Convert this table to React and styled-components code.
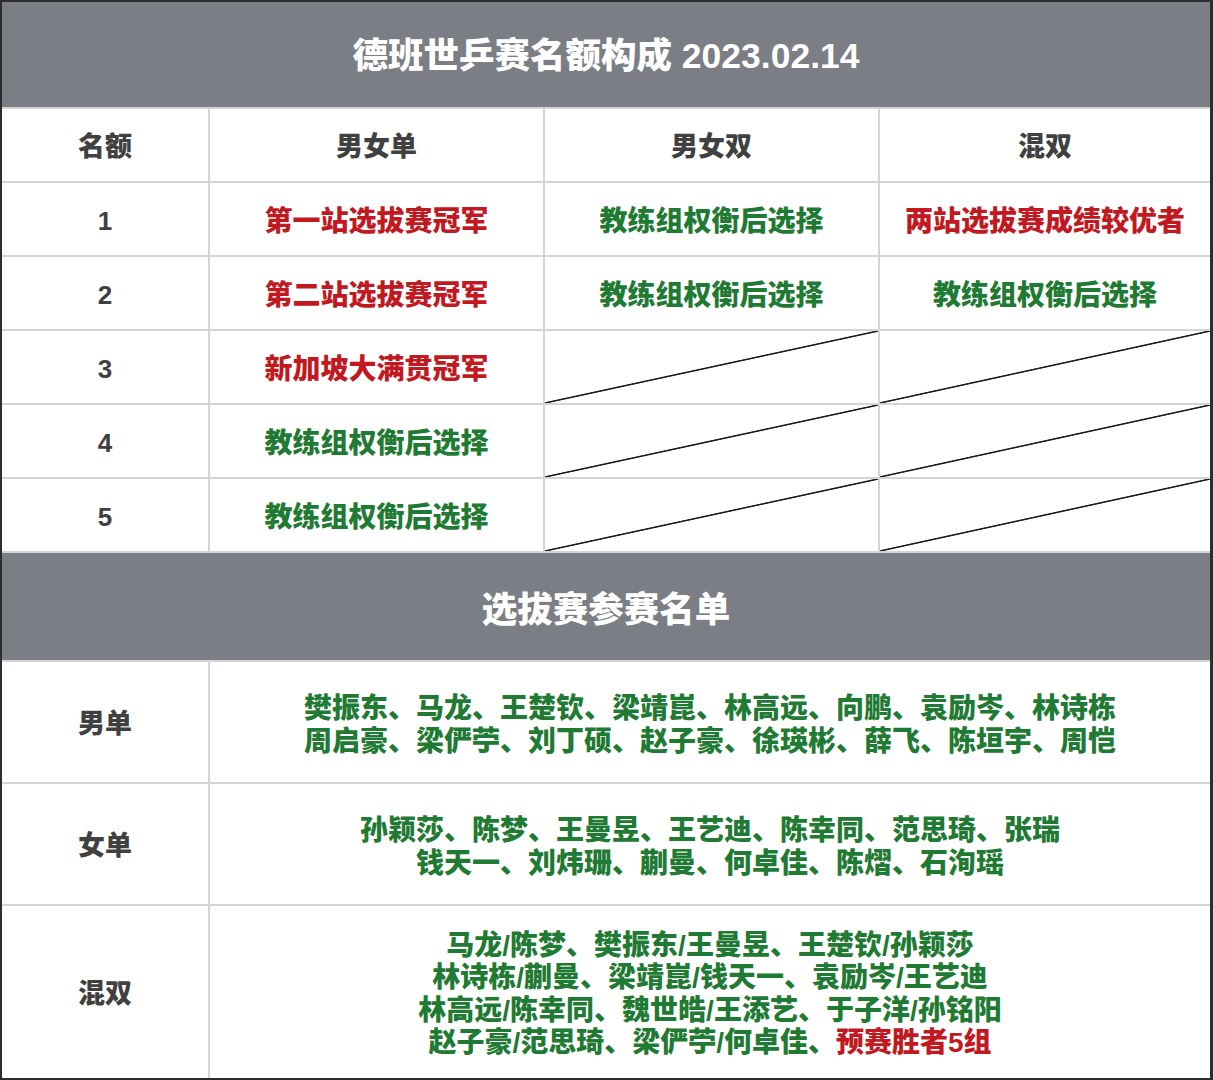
import React from 'react';
import styled, { createGlobalStyle } from 'styled-components';

const GlobalStyle = createGlobalStyle`
  html, body {
    margin: 0;
    padding: 0;
    background: #ffffff;
  }
  body {
    font-family: "Liberation Sans", "Noto Sans CJK SC", sans-serif;
  }
`;

const RED = '#c1191f';
const GREEN = '#1f7a33';
const INK = '#404040';

const Frame = styled.div`
  box-sizing: border-box;
  width: 1213px;
  height: 1080px;
  border-style: solid;
  border-color: #2d2d2d;
  border-width: 2px 3px 2px 2px;
  background: #d4d4d4;
  display: grid;
  grid-template-columns: 206px 333px 333px 330px;
  grid-template-rows: 105px repeat(6, 72px) 107px 120px 120px 172px;
  gap: 2px;
`;

const Band = styled.div`
  box-sizing: border-box;
  grid-column: 1 / -1;
  background: #7b7e84;
  color: #ffffff;
  font-weight: 900;
  font-size: ${p => p.$size || 35.5}px;
  padding-bottom: ${p => p.$lift || 0}px;
  display: flex;
  align-items: center;
  justify-content: center;
`;

const Cell = styled.div`
  box-sizing: border-box;
  background: #ffffff;
  display: flex;
  align-items: center;
  justify-content: center;
  text-align: center;
  padding-top: 5px;
  font-weight: 900;
  font-size: ${p => p.$size || 28}px;
  color: ${p => p.$color || INK};
  line-height: ${p => p.$lh || 1.2};
  grid-column: ${p => p.$span || 'auto'};
`;

const Slash = styled.div`
  background: linear-gradient(
    to bottom right,
    #ffffff calc(50% - 1.2px),
    #1e1e1e calc(50% - 0.4px),
    #1e1e1e calc(50% + 0.4px),
    #ffffff calc(50% + 1.2px)
  );
`;

const Lines = styled.div`
  display: flex;
  flex-direction: column;
  align-items: center;
`;

const Red = styled.span`
  color: ${RED};
`;

const quota = [
  ['1', ['第一站选拔赛冠军', RED], ['教练组权衡后选择', GREEN], ['两站选拔赛成绩较优者', RED]],
  ['2', ['第二站选拔赛冠军', RED], ['教练组权衡后选择', GREEN], ['教练组权衡后选择', GREEN]],
  ['3', ['新加坡大满贯冠军', RED], null, null],
  ['4', ['教练组权衡后选择', GREEN], null, null],
  ['5', ['教练组权衡后选择', GREEN], null, null],
];

export default function App() {
  return (
    <>
      <GlobalStyle />
      <Frame>
        <Band $lift={4}>德班世乒赛名额构成 2023.02.14</Band>

        <Cell $size={27}>名额</Cell>
        <Cell $size={27}>男女单</Cell>
        <Cell $size={27}>男女双</Cell>
        <Cell $size={27}>混双</Cell>

        {quota.map(([num, ...cols]) => (
          <React.Fragment key={num}>
            <Cell $size={26}>{num}</Cell>
            {cols.map((c, i) =>
              c ? (
                <Cell key={i} $color={c[1]}>{c[0]}</Cell>
              ) : (
                <Slash key={i} />
              )
            )}
          </React.Fragment>
        ))}

        <Band>选拔赛参赛名单</Band>

        <Cell $size={27}>男单</Cell>
        <Cell $span="2 / -1" $color={GREEN} $lh="33px">
          <Lines>
            <span>樊振东、马龙、王楚钦、梁靖崑、林高远、向鹏、袁励岑、林诗栋</span>
            <span>周启豪、梁俨苧、刘丁硕、赵子豪、徐瑛彬、薛飞、陈垣宇、周恺</span>
          </Lines>
        </Cell>

        <Cell $size={27}>女单</Cell>
        <Cell $span="2 / -1" $color={GREEN} $lh="33px">
          <Lines>
            <span>孙颖莎、陈梦、王曼昱、王艺迪、陈幸同、范思琦、张瑞</span>
            <span>钱天一、刘炜珊、蒯曼、何卓佳、陈熠、石洵瑶</span>
          </Lines>
        </Cell>

        <Cell $size={27}>混双</Cell>
        <Cell $span="2 / -1" $color={GREEN} $lh="32.5px">
          <Lines>
            <span>马龙/陈梦、樊振东/王曼昱、王楚钦/孙颖莎</span>
            <span>林诗栋/蒯曼、梁靖崑/钱天一、袁励岑/王艺迪</span>
            <span>林高远/陈幸同、魏世皓/王添艺、于子洋/孙铭阳</span>
            <span>赵子豪/范思琦、梁俨苧/何卓佳、<Red>预赛胜者5组</Red></span>
          </Lines>
        </Cell>
      </Frame>
    </>
  );
}
